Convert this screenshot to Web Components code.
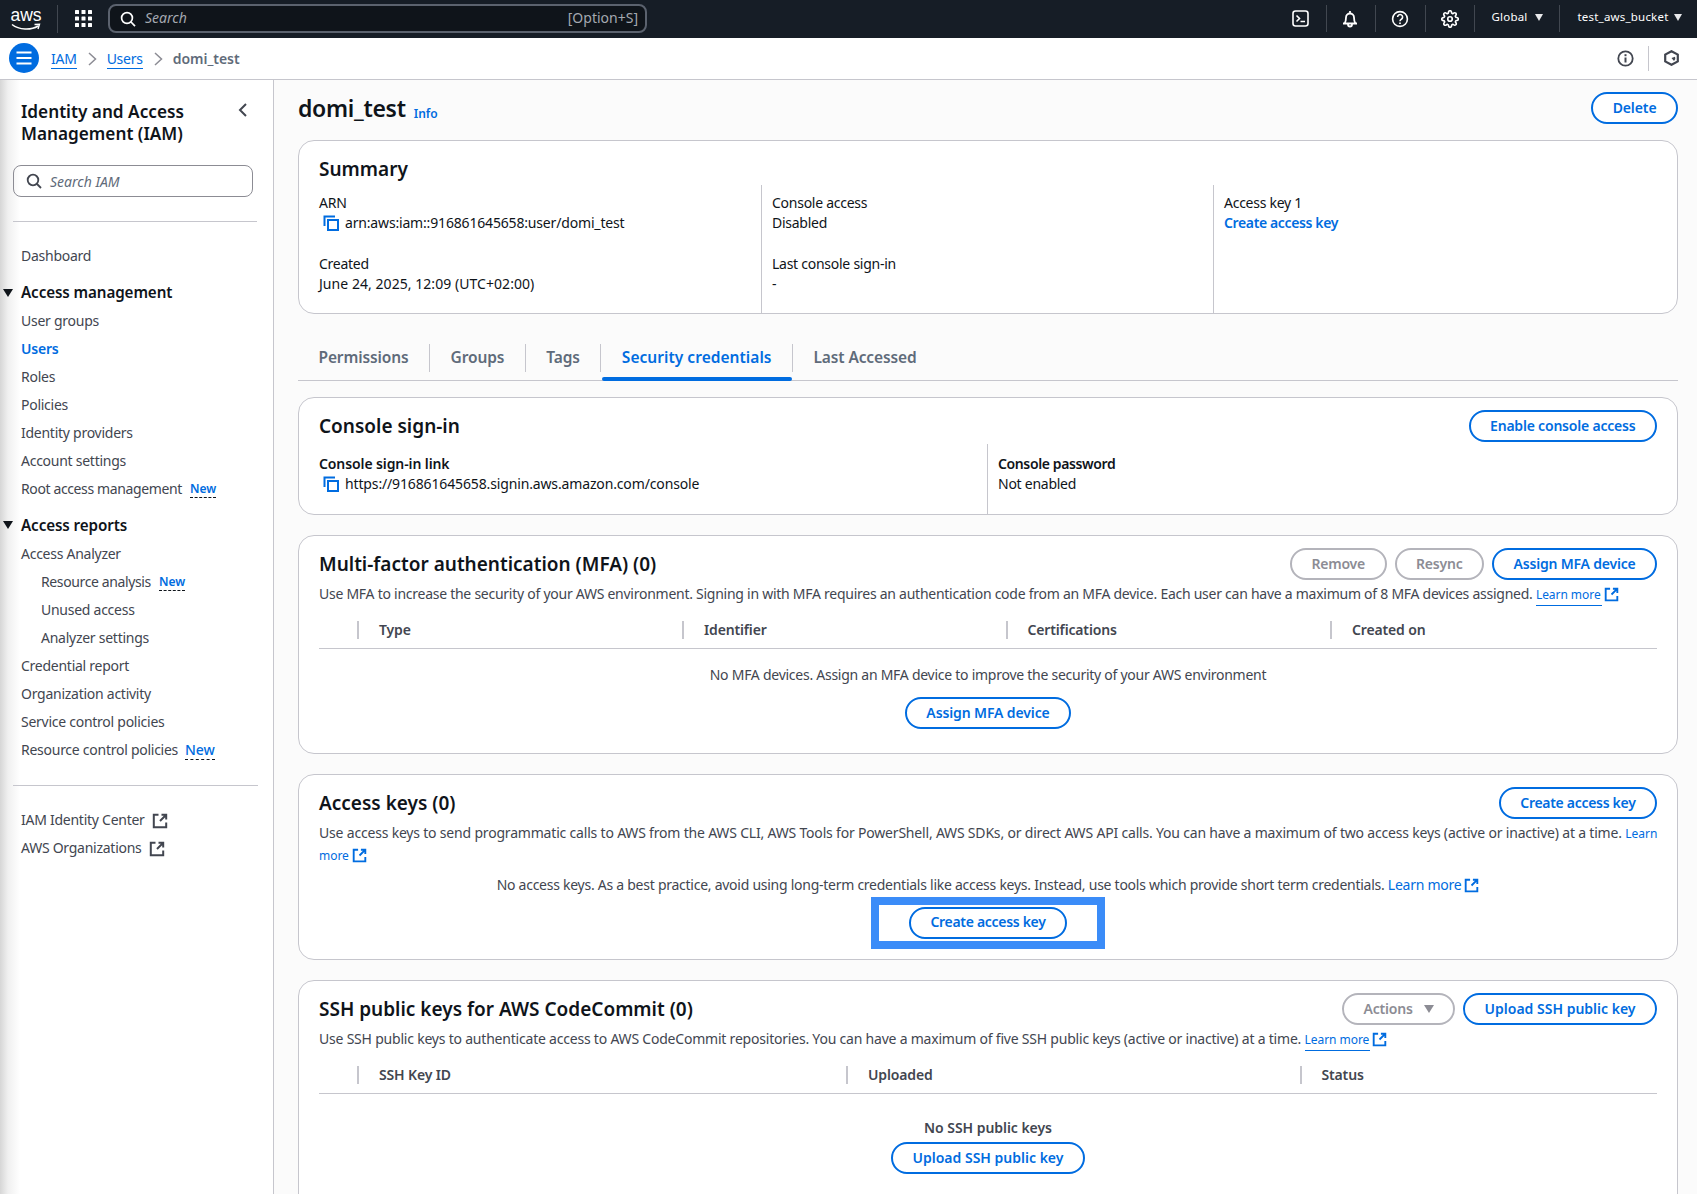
<!DOCTYPE html>
<html lang="en"><head><meta charset="utf-8"><title>domi_test | IAM</title>
<style>
html,body{margin:0;height:100%;overflow:hidden;background:#fff}
body{font:14px/20.5px "Noto Sans","Open Sans",sans-serif;color:#0f141a;letter-spacing:-.26px}
</style></head><body>
<x-app>
  <x-topbar slot="top"></x-topbar>
  <x-crumbs slot="crumbs" current="domi_test"></x-crumbs>
  <x-sidenav slot="side">
    <x-nav>Dashboard</x-nav>
    <x-nav section>Access management</x-nav>
    <x-nav>User groups</x-nav>
    <x-nav active>Users</x-nav>
    <x-nav>Roles</x-nav>
    <x-nav>Policies</x-nav>
    <x-nav>Identity providers</x-nav>
    <x-nav>Account settings</x-nav>
    <x-nav style="letter-spacing:-.38px">Root access management<x-new>New</x-new></x-nav>
    <x-nav section style="margin-bottom:1px">Access reports</x-nav>
    <x-nav>Access Analyzer</x-nav>
    <x-nav sub style="letter-spacing:-.38px">Resource analysis<x-new>New</x-new></x-nav>
    <x-nav sub>Unused access</x-nav>
    <x-nav sub>Analyzer settings</x-nav>
    <x-nav>Credential report</x-nav>
    <x-nav>Organization activity</x-nav>
    <x-nav>Service control policies</x-nav>
    <x-nav>Resource control policies<x-new big>New</x-new></x-nav>
    <x-rule></x-rule>
    <x-nav>IAM Identity Center<x-icon name="ext" size="16" color="#424650" gap="7"></x-icon></x-nav>
    <x-nav>AWS Organizations<x-icon name="ext" size="16" color="#424650" gap="7"></x-icon></x-nav>
  </x-sidenav>
  <x-main slot="main">
    <x-pagehead>domi_test</x-pagehead>

    <x-card style="height:174px">
      <x-h2 slot="title">Summary</x-h2>
      <x-cols cols="442px 452px 1fr" h="121">
        <div>
          <x-kv label="ARN"><x-copy style="letter-spacing:-.17px">arn:aws:iam::916861645658:user/domi_test</x-copy></x-kv>
          <x-kv label="Created"><span style="letter-spacing:.05px">June 24, 2025, 12:09 (UTC+02:00)</span></x-kv>
        </div>
        <div>
          <x-kv label="Console access">Disabled</x-kv>
          <x-kv label="Last console sign-in">-</x-kv>
        </div>
        <div>
          <x-kv label="Access key 1"><x-a strong>Create access key</x-a></x-kv>
        </div>
      </x-cols>
    </x-card>

    <x-tabs>
      <x-tab>Permissions</x-tab>
      <x-tab>Groups</x-tab>
      <x-tab>Tags</x-tab>
      <x-tab active>Security credentials</x-tab>
      <x-tab>Last Accessed</x-tab>
    </x-tabs>

    <x-card style="margin-top:16px;height:118px">
      <x-h2 slot="title">Console sign-in</x-h2>
      <x-btn slot="actions">Enable console access</x-btn>
      <x-cols cols="668px 1fr" h="60" top="2" pad="10">
        <div><x-kv strong label="Console sign-in link"><x-copy>https://916861645658.signin.aws.amazon.com/console</x-copy></x-kv></div>
        <div><x-kv strong label="Console password" style="--ls:-.38px">Not enabled</x-kv></div>
      </x-cols>
    </x-card>

    <x-card style="margin-top:20px;height:219px">
      <x-h2 slot="title">Multi-factor authentication (MFA) (0)</x-h2>
      <x-btn slot="actions" disabled>Remove</x-btn>
      <x-btn slot="actions" disabled>Resync</x-btn>
      <x-btn slot="actions">Assign MFA device</x-btn>
      <x-desc>Use MFA to increase the security of your AWS environment. Signing in with MFA requires an authentication code from an MFA device. Each user can have a maximum of 8 MFA devices assigned. <x-learn small>Learn more</x-learn></x-desc>
      <x-thead cols="38px 325px 323.5px 324.5px 1fr" top="7"><span></span><span>Type</span><span>Identifier</span><span>Certifications</span><span>Created on</span></x-thead>
      <x-empty top="16" gap="12"><span>No MFA devices. Assign an MFA device to improve the security of your AWS environment</span><x-btn style="letter-spacing:-.12px">Assign MFA device</x-btn></x-empty>
    </x-card>

    <x-card style="margin-top:20px;height:186px">
      <x-h2 slot="title">Access keys (0)</x-h2>
      <x-btn slot="actions" style="letter-spacing:-.3px">Create access key</x-btn>
      <x-desc style="letter-spacing:-.19px;white-space:nowrap">Use access keys to send programmatic calls to AWS from the AWS CLI, AWS Tools for PowerShell, AWS SDKs, or direct AWS API calls. You can have a maximum of two access keys (active or inactive) at a time. <x-a small>Learn</x-a><br><x-learn small plain>more</x-learn></x-desc>
      <x-empty top="9" gap="1"><span>No access keys. As a best practice, avoid using long-term credentials like access keys. Instead, use tools which provide short term credentials. <x-learn plain>Learn more</x-learn></span><x-highlight><x-btn style="letter-spacing:-.3px">Create access key</x-btn></x-highlight></x-empty>
    </x-card>

    <x-card style="margin-top:20px;height:262px">
      <x-h2 slot="title">SSH public keys for AWS CodeCommit (0)</x-h2>
      <x-btn slot="actions" disabled caret>Actions</x-btn>
      <x-btn slot="actions" style="letter-spacing:0">Upload SSH public key</x-btn>
      <x-desc style="letter-spacing:-.21px">Use SSH public keys to authenticate access to AWS CodeCommit repositories. You can have a maximum of five SSH public keys (active or inactive) at a time. <x-learn small>Learn more</x-learn></x-desc>
      <x-thead cols="38px 489px 453.5px 1fr" top="7"><span></span><span>SSH Key ID</span><span>Uploaded</span><span>Status</span></x-thead>
      <x-empty top="24" gap="4"><b style="font-weight:600;color:#424650;letter-spacing:-.05px">No SSH public keys</b><x-btn style="letter-spacing:0">Upload SSH public key</x-btn></x-empty>
    </x-card>
  </x-main>
</x-app>

<script>
const ICONS={
 ext:(c)=>`<path d="M6.5 1.800H1.800v12.400h12.400V9.500" fill="none" stroke="${c}" stroke-width="2"/><path d="M9.500 1.800h4.700v4.700M14 2 8 8" fill="none" stroke="${c}" stroke-width="2"/>`,
 copy:(c)=>`<path d="M1.500 11V1.500H12" fill="none" stroke="${c}" stroke-width="2"/><rect x="5" y="5" width="10" height="10" fill="none" stroke="${c}" stroke-width="2"/>`,
};
function def(name,css,html,init){
  customElements.define(name,class extends HTMLElement{
    connectedCallback(){
      if(this.shadowRoot)return;
      const r=this.attachShadow({mode:"open"});
      r.innerHTML=`<style>${css}</style>`+(typeof html==="function"?html(this):html);
      if(init)init(this,r);
    }
  });
}
const attr=(e,n,d)=>e.hasAttribute(n)?e.getAttribute(n):d;

def("x-app",`:host{display:flex;flex-direction:column;height:1194px;overflow:hidden}
.body{display:flex;flex:1;min-height:0}`,`<slot name="top"></slot><slot name="crumbs"></slot><div class="body"><slot name="side"></slot><slot name="main"></slot></div>`);

def("x-icon",`:host{display:inline-flex;vertical-align:middle;flex:none}svg{display:block}`,
 e=>{const s=attr(e,"size","16"),c=attr(e,"color","#006ce0"),g=attr(e,"gap","0");
  return `<svg style="margin-left:${g}px" width="${s}" height="${s}" viewBox="0 0 16 16">${ICONS[attr(e,"name","ext")](c)}</svg>`});

const cell=`.cell{display:flex;align-items:center;justify-content:center;height:27px;border-left:1px solid #414750;box-sizing:border-box;flex:none}`;
def("x-topbar",`:host{display:flex;align-items:center;height:37.5px;background:#161d26;color:#fff;box-sizing:border-box;flex:none;letter-spacing:0}
.logo{width:58px;height:28px;display:flex;flex-direction:column;align-items:center;box-sizing:border-box;padding:2px 5px 0 0;border-right:1px solid #414750;flex:none}
.logo span{font:17.5px/16px "Liberation Sans",sans-serif;letter-spacing:-.1px;height:16px;color:#fff}
.grid{width:50px;display:flex;justify-content:center;flex:none}
.search{width:539px;height:29px;flex:none;box-sizing:border-box;border:2px solid #5b626e;border-radius:8px;background:#0f141a;display:flex;align-items:center;padding:0 7px 0 10px;color:#a4a8b0;font-size:14px}
.search svg{flex:none}
.search i{margin:-2px 0 0 9px;flex:1;font-style:italic}
.search b{font-weight:400;margin-top:-2px}
.sp{flex:1}${cell}
.ic{width:49.5px}.g{width:85px;font-size:11.5px;gap:7px;letter-spacing:.2px}.u{width:138px;font-size:11.5px;gap:5px;letter-spacing:.2px;padding-left:2px}
.g span:first-child,.u span:first-child{margin-top:-3px}
.car{width:0;height:0;border-left:4.500px solid transparent;border-right:4.500px solid transparent;border-top:7px solid #e8e8ea;margin-top:-2px}
.first{border-left:0}`,
`<div class="logo"><span>aws</span><svg width="31" height="9" viewBox="0 0 31 9"><path d="M1 1.500C8 7 20 7.500 27 3" fill="none" stroke="#fff" stroke-width="1.500"/><path d="M23.500 1.500 28.500 1.200 27 6" fill="none" stroke="#fff" stroke-width="1.400"/></svg></div>
<div class="grid"><svg width="17" height="17" viewBox="0 0 17 17" fill="#fff"><rect width="4" height="4" rx=".6"/><rect x="6.5" width="4" height="4" rx=".6"/><rect x="13" width="4" height="4" rx=".6"/><rect y="6.5" width="4" height="4" rx=".6"/><rect x="6.5" y="6.5" width="4" height="4" rx=".6"/><rect x="13" y="6.5" width="4" height="4" rx=".6"/><rect y="13" width="4" height="4" rx=".6"/><rect x="6.5" y="13" width="4" height="4" rx=".6"/><rect x="13" y="13" width="4" height="4" rx=".6"/></svg></div>
<div class="search"><svg width="16" height="16" viewBox="0 0 16 16" fill="none" stroke="#fff" stroke-width="1.700"><circle cx="7" cy="7" r="5.400"/><path d="m11 11 4 4.200"/></svg><i>Search</i><b>[Option+S]</b></div>
<div class="sp"></div>
<div class="cell ic first"><svg width="17" height="17" viewBox="0 0 17 17" fill="none" stroke="#fff" stroke-width="1.600"><rect x="1" y="1" width="15" height="15" rx="2.500"/><path d="m4.500 5.500 3 3-3 3M8.500 11.500H13"/></svg></div>
<div class="cell ic"><svg style="margin-left:-2px" width="18" height="18" viewBox="0 0 18 18" fill="none" stroke="#fff" stroke-width="1.800"><path d="M2 13.500h14M3.500 13.500c1-1.300 1.500-2.500 1.500-6a4 4 0 0 1 8 0c0 3.500 .5 4.700 1.500 6M7 14.500a2 2 0 0 0 4 0M9 1v2.500"/></svg></div>
<div class="cell ic"><svg width="18" height="18" viewBox="0 0 18 18" fill="none" stroke="#fff" stroke-width="1.600"><circle cx="9" cy="9" r="7.400"/><path d="M6.600 7a2.500 2.500 0 1 1 3.800 2.200C9.500 9.800 9 10.200 9 11.200"/><path d="M9 12.500v1.500" stroke-width="1.700"/></svg></div>
<div class="cell ic"><svg width="18" height="18" viewBox="0 0 24 24" fill="none" stroke="#fff" stroke-width="2.200"><circle cx="12" cy="12" r="3"/><path d="M19.400 15a1.650 1.650 0 0 0 .33 1.820l.06.06a2 2 0 0 1 0 2.830 2 2 0 0 1-2.830 0l-.06-.06a1.650 1.650 0 0 0-1.820-.33 1.650 1.650 0 0 0-1 1.510V21a2 2 0 0 1-2 2 2 2 0 0 1-2-2v-.09A1.650 1.650 0 0 0 9 19.400a1.650 1.650 0 0 0-1.820.33l-.06.06a2 2 0 0 1-2.830 0 2 2 0 0 1 0-2.830l.06-.06a1.650 1.650 0 0 0 .33-1.820 1.650 1.650 0 0 0-1.510-1H3a2 2 0 0 1-2-2 2 2 0 0 1 2-2h.09A1.650 1.650 0 0 0 4.600 9a1.650 1.650 0 0 0-.33-1.820l-.06-.06a2 2 0 0 1 0-2.830 2 2 0 0 1 2.830 0l.06.06a1.650 1.650 0 0 0 1.820.33H9a1.650 1.650 0 0 0 1-1.510V3a2 2 0 0 1 2-2 2 2 0 0 1 2 2v.09a1.650 1.650 0 0 0 1 1.510 1.650 1.650 0 0 0 1.820-.33l.06-.06a2 2 0 0 1 2.830 0 2 2 0 0 1 0 2.830l-.06.06a1.650 1.650 0 0 0-.33 1.820V9a1.650 1.650 0 0 0 1.510 1H21a2 2 0 0 1 2 2 2 2 0 0 1-2 2h-.09a1.650 1.650 0 0 0-1.510 1z"/></svg></div>
<div class="cell g"><span>Global</span><span class="car"></span></div>
<div class="cell u"><span>test_aws_bucket</span><span class="car"></span></div>`);

def("x-crumbs",`:host{display:flex;align-items:center;height:42px;box-sizing:border-box;border-bottom:1.500px solid #c6c6cd;background:#fff;padding:2px 0 0 9px;flex:none;color:#5f6b7a}
.m{width:30px;height:30px;border-radius:50%;background:#006ce0;display:flex;align-items:center;justify-content:center;margin:-2px 12px 0 0;flex:none}
a{color:#006ce0;text-decoration:none;border-bottom:1px solid #006ce0;line-height:19px}
.ch{margin:0 9px 0 10px;flex:none}
b{font-weight:600;color:#5f6b7a;letter-spacing:-.02px}
.sp{flex:1}
.r{display:flex;align-items:center;height:28px;padding-right:18px;margin-top:-2px}
.r svg{display:block}
.d{width:1px;height:25px;background:#c6c6cd;margin:0 15px 0 14px}`,
e=>`<div class="m"><svg width="18" height="14" viewBox="0 0 18 14" fill="none" stroke="#fff" stroke-width="2.200"><path d="M1.500 1.500h15M1.500 7h15M1.500 12.500h15"/></svg></div>
<a>IAM</a><svg class="ch" width="11" height="14" viewBox="0 0 11 14" fill="none" stroke="#8c8c94" stroke-width="1.500"><path d="m2 1 6.500 6L2 13"/></svg>
<a>Users</a><svg class="ch" width="11" height="14" viewBox="0 0 11 14" fill="none" stroke="#8c8c94" stroke-width="1.500"><path d="m2 1 6.500 6L2 13"/></svg>
<b>${e.getAttribute("current")}</b><div class="sp"></div>
<div class="r"><svg width="17" height="17" viewBox="0 0 17 17" fill="none" stroke="#424650" stroke-width="1.800"><circle cx="8.500" cy="8.500" r="7.200"/><path d="M8.500 7.500v5" stroke-width="2"/><path d="M8.500 4.200v2" stroke-width="2"/></svg><span class="d"></span>
<svg width="15" height="16" viewBox="0 0 15 16" fill="none" stroke="#424650" stroke-width="2.200"><path d="M7.500 1.200 13.800 4.600v6.800L7.500 14.800 1.200 11.400V4.600z"/><path d="M7.500 8 11 6.800a3.500 3.500 0 0 1-1 4.200z" fill="#424650" stroke="none"/></svg></div>`);

def("x-rule",`:host{display:block;height:1px;background:#c6c6cd;margin:21px 0 20px 13px;width:245px}`,``);

def("x-sidenav",`:host{display:block;width:274px;flex:none;box-sizing:border-box;border-right:1.500px solid #c6c6cd;background:linear-gradient(to right,#d6d6d6 0,#f0f0f0 8px,#fff 20px);padding:21px 16px 0 13px}
.h{display:flex;align-items:flex-start;justify-content:space-between;padding:0 8px;font-size:17.2px;line-height:22px;font-weight:600;letter-spacing:0}
.h svg{margin:1px 1px 0 0;flex:none}
.s{height:32px;margin:20px 4px 0 0;box-sizing:border-box;border:1px solid #8c8c94;border-radius:8px;display:flex;align-items:center;padding-left:12px;color:#5f6b7a;letter-spacing:0}
.s i{margin:4px 0 0 8px}
hr{border:0;height:1px;background:#c6c6cd;margin:24px 0 20.500px}
.n{margin:0 0 0 -13px}`,
`<div class="h"><span>Identity and Access Management (IAM)</span><svg width="10" height="16" viewBox="0 0 10 16" fill="none" stroke="#424650" stroke-width="2"><path d="M8 2 2 8l6 6"/></svg></div>
<div class="s"><svg width="16" height="16" viewBox="0 0 16 16" fill="none" stroke="#424650" stroke-width="1.800"><circle cx="7" cy="7" r="5.300"/><path d="m11 11 4 4"/></svg><i>Search IAM</i></div>
<hr><div class="n"><slot></slot></div>`);

def("x-nav",`:host{display:flex;align-items:center;height:28px;padding:1px 0 0 21px;color:#424650;white-space:nowrap;box-sizing:border-box}
:host([active]){color:#006ce0;font-weight:600;letter-spacing:-.2px}
:host([sub]){padding-left:41px}
:host([section]){margin-top:8.500px;padding:0 0 0 3px;color:#0f141a;font-size:15.2px;font-weight:600;letter-spacing:-.1px}
.t{width:0;height:0;border-left:5px solid transparent;border-right:5px solid transparent;border-top:8.500px solid #0f141a;margin-right:8px}`,
e=>(e.hasAttribute("section")?`<span class="t"></span>`:"")+`<slot></slot>`);

def("x-new",`:host{display:inline-block;margin-left:8px;font-size:12px;font-weight:600;color:#006ce0;line-height:16px;border-bottom:1px dashed #0f141a;letter-spacing:0}
:host([big]){font-size:14px;font-weight:500;line-height:18px;margin-left:7px;letter-spacing:-.1px}`,`<slot></slot>`);

def("x-main",`:host{display:block;flex:1;min-width:0;background:#fbfbfb;padding:0 19px 0 24px;overflow:hidden}`,`<slot></slot>`);

def("x-pagehead",`:host{display:flex;align-items:center;height:60.5px;box-sizing:border-box;padding-bottom:3px}
h1{font-size:23px;font-weight:600;margin:0;line-height:30px;letter-spacing:-.3px}
a{font-size:12px;font-weight:600;color:#006ce0;margin:12px 0 0 8px;letter-spacing:0}
.sp{flex:1}`,
`<h1><slot></slot></h1><a>Info</a><div class="sp"></div><x-btn style="letter-spacing:-.1px">Delete</x-btn>`);

def("x-card",`:host{display:block;box-sizing:border-box;border:1px solid #c6c6cd;border-radius:16px;background:#fff;padding:12px 20px 10px;overflow:hidden}
.h{display:flex;align-items:center;min-height:32px;justify-content:space-between}
.a{display:flex;gap:8px}`,
`<div class="h"><slot name="title"></slot><div class="a"><slot name="actions"></slot></div></div><slot></slot>`);

def("x-h2",`:host{display:block;font-size:19px;font-weight:600;line-height:24px;color:#0f141a;letter-spacing:0}`,`<slot></slot>`);

def("x-btn",`:host{display:inline-flex;align-items:center;justify-content:center;height:32px;box-sizing:border-box;border:2px solid #006ce0;border-radius:20px;padding:0 19.500px;color:#006ce0;font-weight:600;white-space:nowrap;background:#fff;letter-spacing:-.2px}
:host([disabled]){border-color:#b4b4bb;color:#8c8c94}
.c{width:0;height:0;border-left:5.500px solid transparent;border-right:5.500px solid transparent;border-top:8px solid #8c8c94;margin-left:11px}`,
e=>`<slot></slot>`+(e.hasAttribute("caret")?`<span class="c"></span>`:""));

def("x-cols",`:host{display:block}
.g{display:grid}
::slotted(div){box-sizing:border-box;padding:var(--p) 0 0 10px;border-left:1px solid #c6c6cd}
::slotted(div:first-child){border-left:0;padding-left:0}`,
e=>`<div class="g" style="--p:${attr(e,"pad","8")}px;grid-template-columns:${e.getAttribute("cols")};height:${e.getAttribute("h")}px;margin-top:${attr(e,"top","0")}px"><slot></slot></div>`);

def("x-kv",`:host{display:block;margin-bottom:20.5px;line-height:20px}.l{display:block}:host([strong]) .l{font-weight:600;letter-spacing:var(--ls,-.1px)}`,
e=>`<span class="l">${e.getAttribute("label")}</span><slot></slot>`);

def("x-copy",`:host{display:flex;align-items:center;letter-spacing:-.14px}x-icon{margin:0 6px 0 4px}`,
`<x-icon name="copy" size="16"></x-icon><slot></slot>`);

def("x-a",`:host{color:#006ce0}:host([strong]){font-weight:600;letter-spacing:-.37px}:host([small]){font-size:12px;letter-spacing:0}`,`<slot></slot>`);

def("x-learn",`:host{color:#006ce0;white-space:nowrap}:host([small]){font-size:12px;letter-spacing:-.05px}
.u{border-bottom:1px solid #006ce0;padding-right:1px;padding-bottom:2px}:host([plain]) .u{border:0}
x-icon{position:relative;top:-1px;margin-left:2px}`,
`<span class="u"><slot></slot></span><x-icon name="ext" size="15"></x-icon>`);

def("x-desc",`:host{display:block;margin-top:4px;color:#424650;line-height:20.500px}`,`<slot></slot>`);

def("x-thead",`:host{display:block;letter-spacing:-.15px}
.g{display:grid;height:36px;border-bottom:1px solid #c6c6cd;align-items:center;box-sizing:border-box}
::slotted(span){display:flex;align-items:center;height:18px;border-left:2px solid #c6c6cd;padding-left:20px;font-weight:600;color:#424650;box-sizing:border-box}
::slotted(span:first-child){border:0;padding:0}`,
e=>`<div class="g" style="grid-template-columns:${e.getAttribute("cols")};margin-top:${attr(e,"top","0")}px"><slot></slot></div>`);

def("x-empty",`:host{display:flex;flex-direction:column;align-items:center;color:#424650}`,
e=>`<div style="height:${attr(e,"top","0")}px"></div><style>::slotted(*:first-child){margin-bottom:${attr(e,"gap","0")}px}</style><slot></slot>`);

def("x-highlight",`:host{display:flex;box-sizing:border-box;border:8px solid #3b8cf8;padding:2px 30px;background:#fff}`,`<slot></slot>`);

def("x-tabs",`:host{display:flex;align-items:center;height:53px;margin-top:14px;padding-top:7px;box-sizing:border-box;border-bottom:1px solid #c6c6cd}`,`<slot></slot>`);
def("x-tab",`:host{display:flex;align-items:center;position:relative;height:28px;padding:0 20.500px;font-size:15.500px;font-weight:600;letter-spacing:-.12px;color:#5f6b7a;border-left:1px solid #c6c6cd;white-space:nowrap;box-sizing:border-box}
:host(:first-child){border-left:0}
:host([active]){color:#006ce0;letter-spacing:.04px}
:host([active])::after{content:"";position:absolute;left:1px;right:0;bottom:-9.5px;height:4px;border-radius:2px;background:#006ce0}`,`<slot></slot>`);
</script>
</body></html>
